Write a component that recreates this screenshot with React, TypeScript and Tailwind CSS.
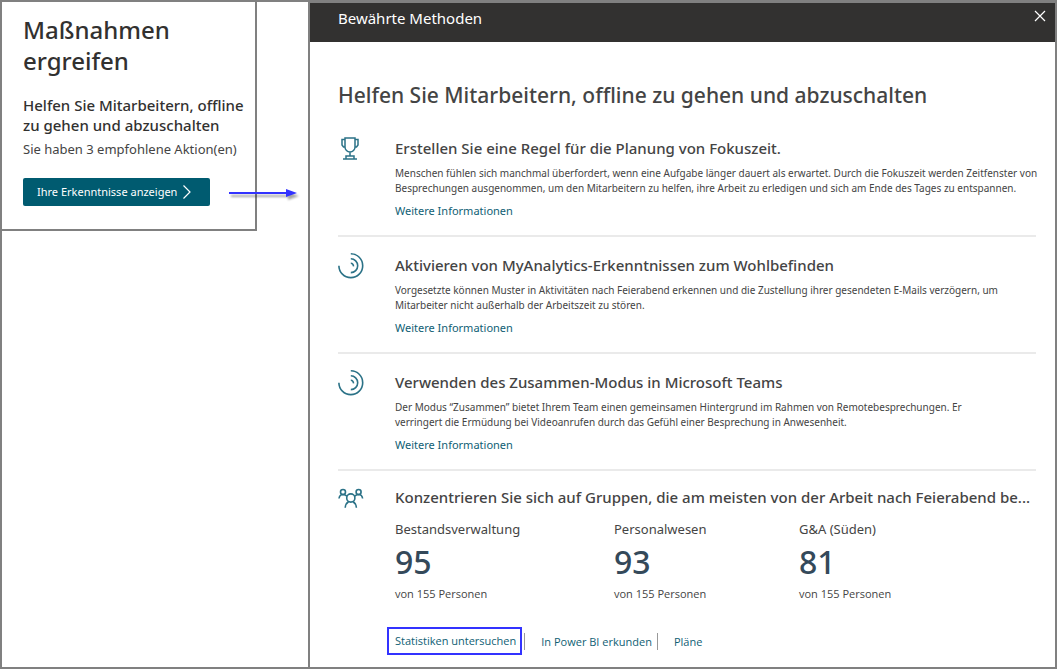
import type { ReactNode } from "react";

interface Practice {
    title: string;
    text: string;
    icon: ReactNode;
}

interface Group {
    name: string;
    score: number;
}

const practices: Practice[] = [
    {
        title: "Erstellen Sie eine Regel für die Planung von Fokuszeit.",
        text: "Menschen fühlen sich manchmal überfordert, wenn eine Aufgabe länger dauert als erwartet. Durch die Fokuszeit werden Zeitfenster von\nBesprechungen ausgenommen, um den Mitarbeitern zu helfen, ihre Arbeit zu erledigen und sich am Ende des Tages zu entspannen.",
        icon: <TrophyIcon />,
    },
    {
        title: "Aktivieren von MyAnalytics-Erkenntnissen zum Wohlbefinden",
        text: "Vorgesetzte können Muster in Aktivitäten nach Feierabend erkennen und die Zustellung ihrer gesendeten E-Mails verzögern, um\nMitarbeiter nicht außerhalb der Arbeitszeit zu stören.",
        icon: <AnalyticsIcon />,
    },
    {
        title: "Verwenden des Zusammen-Modus in Microsoft Teams",
        text: "Der Modus “Zusammen” bietet Ihrem Team einen gemeinsamen Hintergrund im Rahmen von Remotebesprechungen. Er\nverringert die Ermüdung bei Videoanrufen durch das Gefühl einer Besprechung in Anwesenheit.",
        icon: <AnalyticsIcon />,
    },
];

const groups: Group[] = [
    { name: "Bestandsverwaltung", score: 95 },
    { name: "Personalwesen", score: 93 },
    { name: "G&A (Süden)", score: 81 },
];

function TrophyIcon() {
    return (
        <svg width="26" height="26" viewBox="0 0 26 26" fill="none" stroke="#2b7287" strokeWidth="1.5" aria-hidden="true">
            <path d="M7 2h10v9a5 5 0 0 1-10 0zM7 3.5H4V9l1.5 2H7M17 3.5h3V9l-1.5 2H17M12 16v4M8 23v-3h8v3M5 23h14" />
        </svg>
    );
}

function AnalyticsIcon() {
    return (
        <svg width="26" height="26" viewBox="0 0 26 26" fill="none" stroke="#2b7287" strokeWidth="1.6" aria-hidden="true">
            <path d="M12.8 .8a11.900 11.900 0 1 1-11.900 11.900" />
            <path d="M12.8 5.800a6.900 6.900 0 1 1 0 13.800" />
            <path d="M12.8 10.300a2.600 2.600 0 0 1 2.600 3" />
        </svg>
    );
}

function PeopleIcon() {
    return (
        <svg width="26" height="26" viewBox="0 0 26 26" fill="none" stroke="#2b7287" strokeWidth="1.6" aria-hidden="true">
            <circle cx="5" cy="6" r="2.5" />
            <circle cx="20.6" cy="6" r="2.500" />
            <circle cx="12.8" cy="12" r="4.100" />
            <path d="M1 12.500Q1.500 8.600 5 8.500Q7.500 8.600 9 10.200" />
            <path d="M24.600 12.500Q24.100 8.600 20.600 8.500Q18.100 8.600 16.600 10.200" />
            <path d="M7.200 21.800q.4-4.400 3.400-6M18.400 21.800q-.4-4.400-3.400-6" />
        </svg>
    );
}

function Arrow() {
    return (
        <svg
            width="72"
            height="14"
            viewBox="0 0 72 14"
            className="shrink-0 drop-shadow-[2px_3px_1px_rgba(0,0,0,0.35)]"
            aria-hidden="true">
            <path d="M1 8h58" stroke="#3333ff" strokeWidth="2" />
            <path d="M58 4l11 4-11 4z" fill="#3333ff" />
        </svg>
    );
}

function PracticeItem({ title, text, icon }: Practice) {
    return (
        <section className="flex border-b-2 border-[#eaeaea] pt-4 pb-[15px]">
            <div className="w-[57px] shrink-0">{icon}</div>
            <div className="min-w-0 flex-1">
                <h3 className="mt-px text-[15px] leading-[22px] font-medium">{title}</h3>
                <p className="mt-[7px] -mr-2 text-[10px] leading-[15px] whitespace-pre-line">{text}</p>
                <a href="#" className="mt-[6px] block w-fit text-[11px] leading-[18px] text-[#0f6074]">
                    Weitere Informationen
                </a>
            </div>
        </section>
    );
}

function ActionCard() {
    return (
        <div className="mr-[51px] h-[229px] border-r-2 border-b-2 border-[#808080] pt-3 pl-[21px]">
            <h2 className="w-[200px] text-[24px] leading-[31px] font-medium text-[#323130]">Maßnahmen ergreifen</h2>
            <h3 className="mt-[19px] text-[15px] leading-[20px] font-medium text-[#323130]">
                Helfen Sie Mitarbeitern, offline zu gehen und abzuschalten
            </h3>
            <p className="mt-[4px] text-[13px] leading-[20px] whitespace-nowrap">Sie haben 3 empfohlene Aktion(en)</p>
            <div className="mt-[19px] flex items-center gap-[18px]">
                <button
                    type="button"
                    className="flex h-[28px] w-[187px] shrink-0 items-center gap-[6px] rounded-xs bg-[#005b70] pl-[14px] text-[11px] whitespace-nowrap text-white">
                    Ihre Erkenntnisse anzeigen
                    <svg width="8" height="14" viewBox="0 0 8 14" fill="none" stroke="currentColor" strokeWidth="1.2" aria-hidden="true">
                        <path d="M.5 .5L7 7 .5 13.500" />
                    </svg>
                </button>
                <Arrow />
            </div>
        </div>
    );
}

export default function App() {
    return (
        <div className="flex min-h-screen bg-white font-['Noto_Sans','Open_Sans',sans-serif] text-[#444444]">
            <aside className="w-[308px] shrink-0 border-t-2 border-b-2 border-l-2 border-[#808080]">
                <ActionCard />
            </aside>
            <main className="min-w-0 flex-1 border-2 border-[#808080]">
                <header className="flex h-[40px] items-start justify-between border-t border-[#808080] bg-[#323130] pt-1 pr-[6px] pl-[28px] text-white">
                    <h1 className="text-[15px] leading-[22px]">Bewährte Methoden</h1>
                    <button type="button" aria-label="Schließen" className="p-[3px]">
                        <svg width="12" height="12" viewBox="0 0 12 12" stroke="currentColor" strokeWidth="1.2" aria-hidden="true">
                            <path d="M1 1l10 10M11 1L1 11" />
                        </svg>
                    </button>
                </header>
                <div className="pt-[38px] pr-[19px] pb-[11px] pl-[28px]">
                    <h2 className="mb-[10px] text-[21px] leading-[30px] font-medium">
                        Helfen Sie Mitarbeitern, offline zu gehen und abzuschalten
                    </h2>
                    {practices.map((p) => (
                        <PracticeItem key={p.title} {...p} />
                    ))}
                    <section className="flex pt-[15px]">
                        <div className="w-[57px] shrink-0">
                            <PeopleIcon />
                        </div>
                        <div className="min-w-0 flex-1">
                            <h3 className="truncate text-[15px] leading-[22px] font-medium">
                                Konzentrieren Sie sich auf Gruppen, die am meisten von der Arbeit nach Feierabend be...
                            </h3>
                            <div className="mt-[11px] grid grid-cols-[219fr_185fr_237fr]">
                                {groups.map((g) => (
                                    <div key={g.name}>
                                        <div className="text-[13px] leading-[20px]">{g.name}</div>
                                        <div className="mt-[3px] text-[32px] leading-[40px] font-medium text-[#34495a]">
                                            {g.score}
                                        </div>
                                        <div className="mt-[3px] font-['Open_Sans',sans-serif] text-[11px] leading-[18px]">
                                            von 155 Personen
                                        </div>
                                    </div>
                                ))}
                            </div>
                            <nav className="mt-[24px] -ml-[8px] flex items-center font-['Open_Sans',sans-serif] text-[11px] whitespace-nowrap text-[#0f6074]">
                                <a href="#" className="border-2 border-[#3333ff] pr-1 pl-[6px] leading-[24px]">
                                    Statistiken untersuchen
                                </a>
                                <a href="#" className="ml-[2px] border-l border-[#999999] pr-[5px] pl-4 leading-[17px]">
                                    In Power BI erkunden
                                </a>
                                <a href="#" className="border-l border-[#999999] pl-4 leading-[17px]">
                                    Pläne
                                </a>
                            </nav>
                        </div>
                    </section>
                </div>
            </main>
        </div>
    );
}
